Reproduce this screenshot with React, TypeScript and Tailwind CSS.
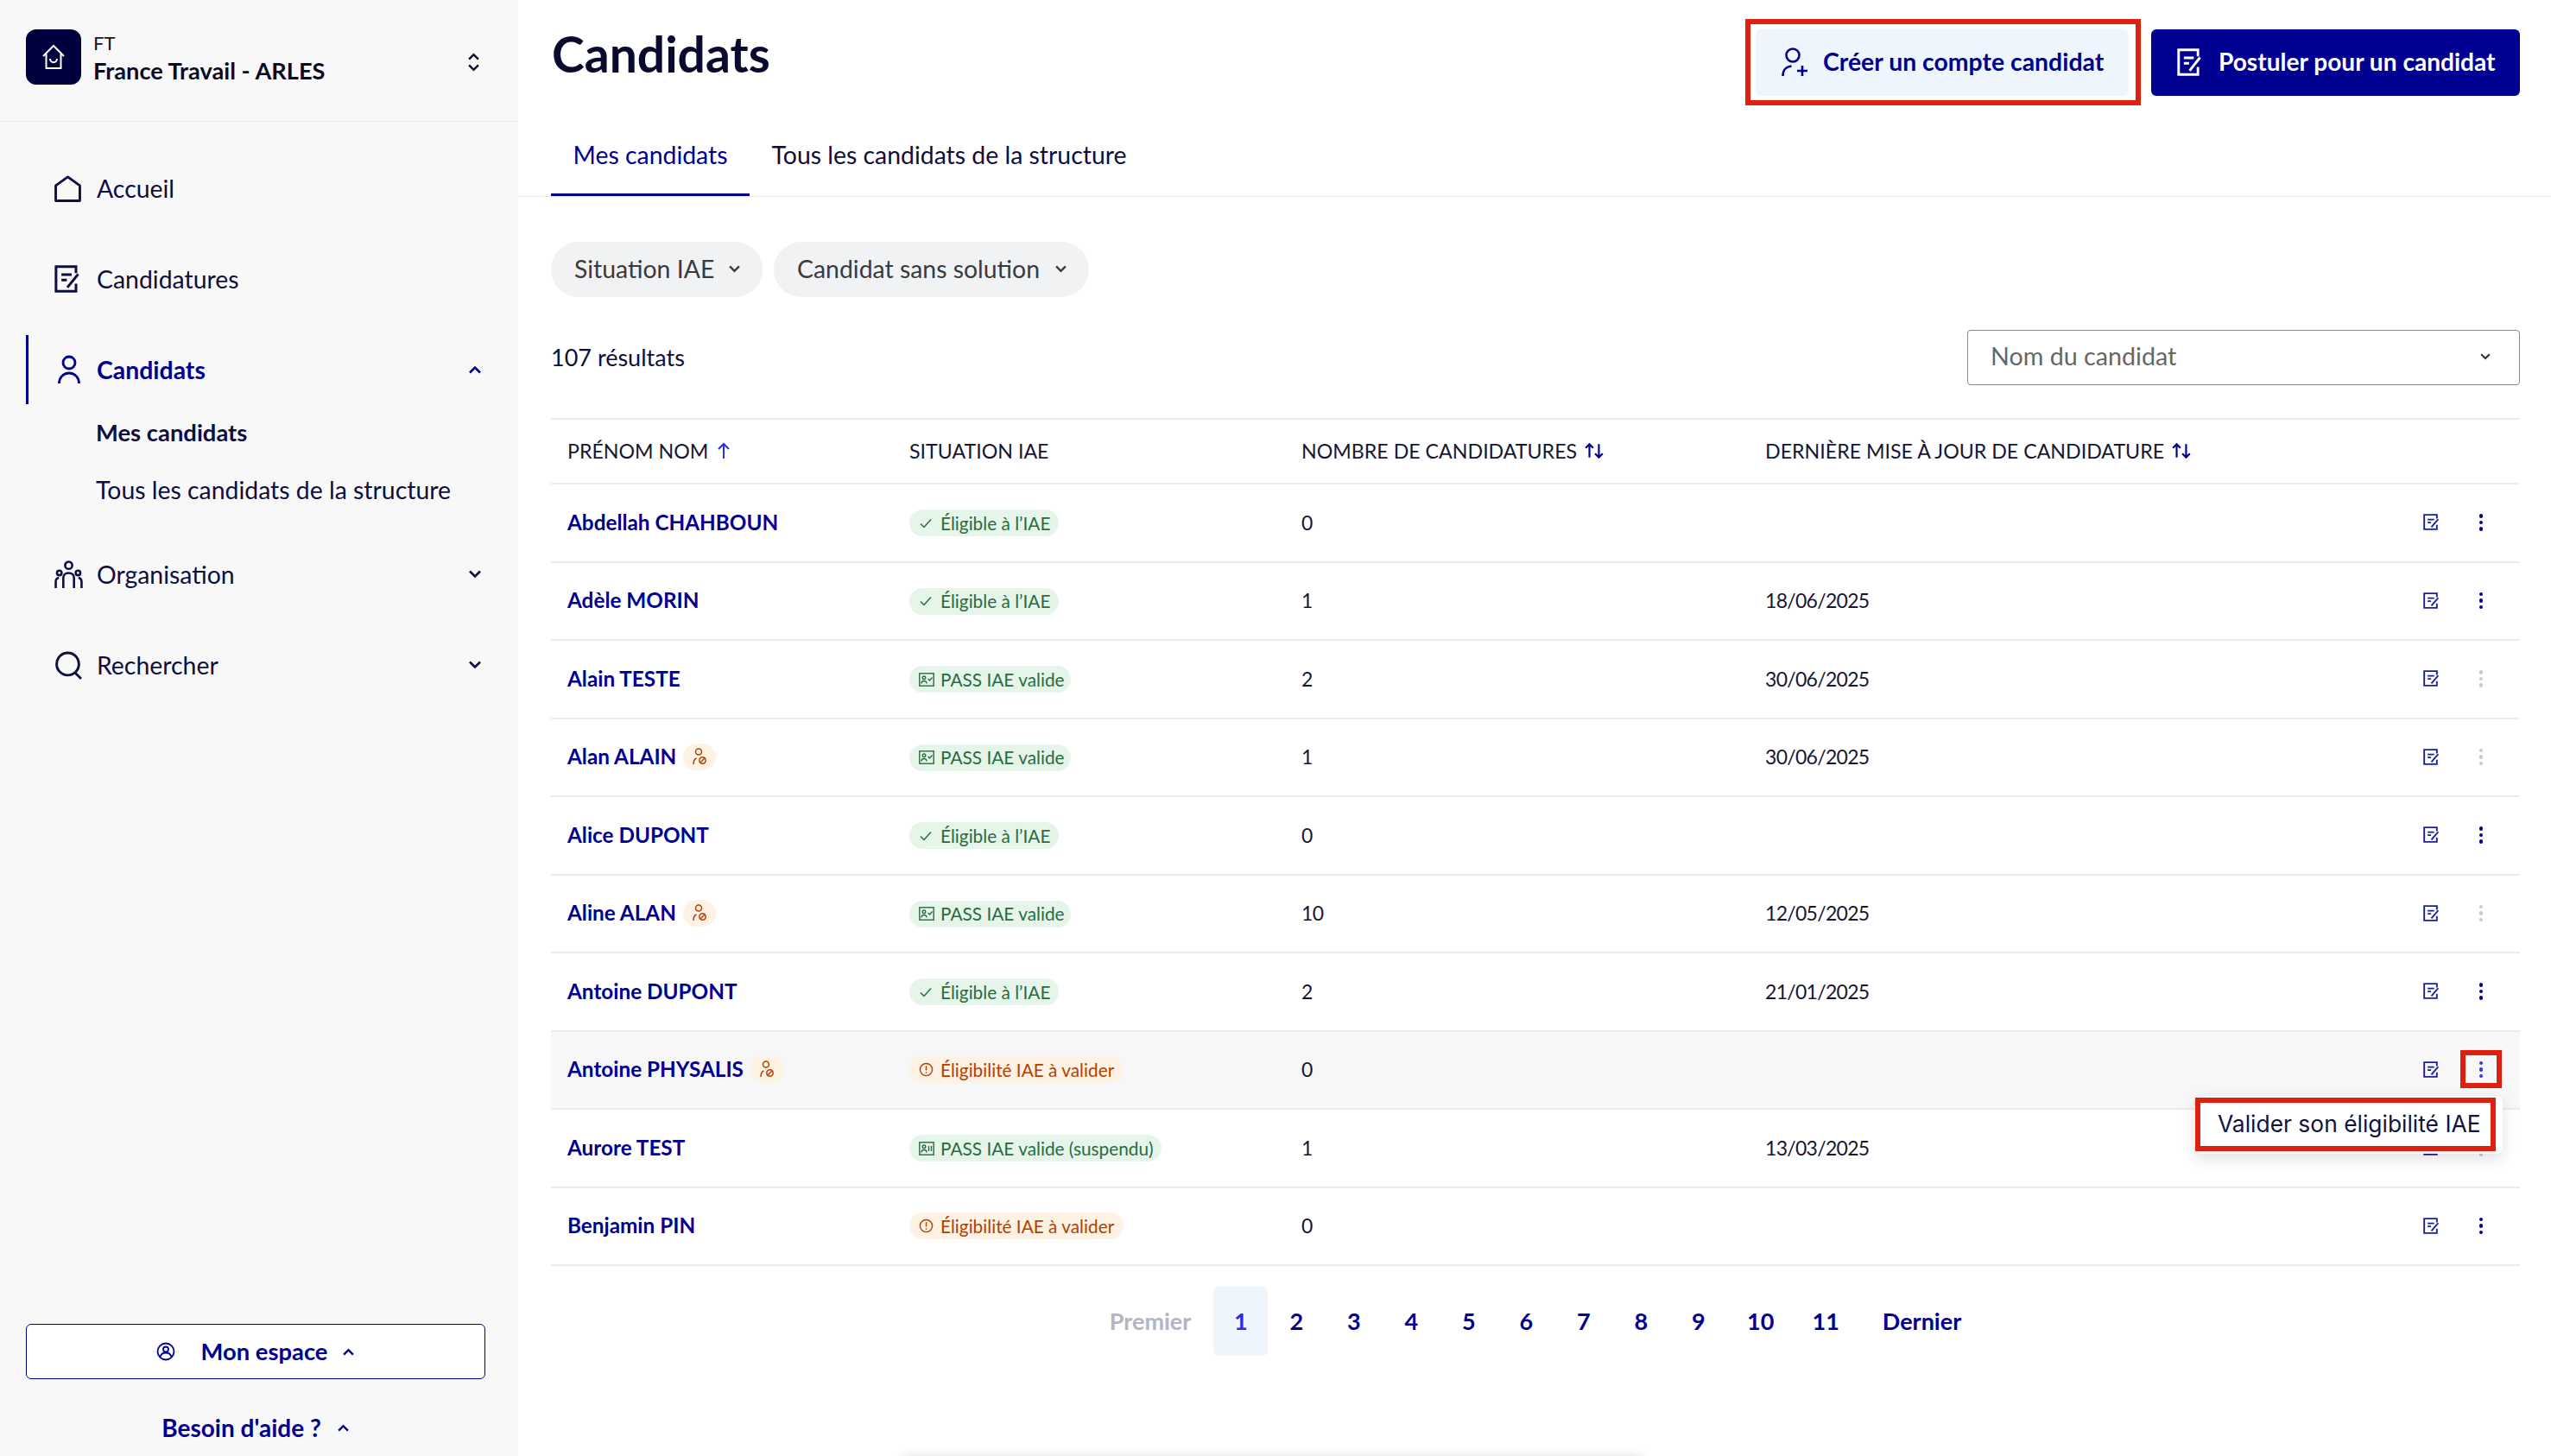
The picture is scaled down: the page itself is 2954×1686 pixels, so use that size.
import React from "react";

const navy = "#000091";

function EditIcon({ className }: { className?: string }) {
  return (
    <svg viewBox="0 0 24 26" preserveAspectRatio="none" fill="none" stroke="currentColor" strokeWidth="2.400" className={className}>
      <path d="M20 7.500V1.500H1.500v23H20v-7" />
      <path d="M6.500 9h9.500M6.500 14h5M12 21 22 8.500" />
    </svg>
  );
}

function Chevron({ up, className }: { up?: boolean; className?: string }) {
  return (
    <svg viewBox="0 0 16 10" fill="none" stroke="currentColor" strokeWidth="2.600" className={className}>
      <path d={up ? "M2 8.500 8 2.500l6 6" : "M2 1.500l6 6 6-6"} />
    </svg>
  );
}

function PersonIcon({ className }: { className?: string }) {
  return (
    <svg viewBox="0 0 28 34" fill="none" stroke="currentColor" strokeWidth="2.800" className={className}>
      <circle cx="14" cy="9" r="7" />
      <path d="M2.500 33c0-7 5-12 11.500-12S25.500 26 25.500 33" />
    </svg>
  );
}

function NavIcon({ name }: { name: string }) {
  if (name === "home") {
    return (
      <svg viewBox="0 0 30 30" fill="none" stroke="currentColor" strokeWidth="2.800" className="h-[31px] w-[31px]">
        <path d="M15 1.800 28.500 11.500V28.500H1.500V11.500Z" strokeLinejoin="round" />
      </svg>
    );
  }
  if (name === "edit") return <EditIcon className="h-[32px] w-[30px]" />;
  if (name === "person") return <PersonIcon className="h-[34px] w-[28px]" />;
  if (name === "org") {
    return (
      <svg viewBox="0 0 32 32" fill="none" stroke="currentColor" strokeWidth="2.500" className="h-[33px] w-[33px]">
        <circle cx="16" cy="5.500" r="4" />
        <circle cx="5.500" cy="14" r="2.600" />
        <circle cx="26.500" cy="14" r="2.600" />
        <path d="M10 31V19.500c0-3.500 2.500-5.500 6-5.500s6 2 6 5.500V31" />
        <path d="M1.500 31v-7c0-2 1-4 3.500-4.500M30.500 31v-7c0-2-1-4-3.500-4.500" />
      </svg>
    );
  }
  return (
    <svg viewBox="0 0 32 32" fill="none" stroke="currentColor" strokeWidth="2.800" className="h-[33px] w-[33px]">
      <circle cx="15" cy="14.500" r="12.500" />
      <path d="M23 24l7 7" />
    </svg>
  );
}

function BadgeIcon({ kind }: { kind: string }) {
  if (kind === "check") {
    return (
      <svg viewBox="0 0 16 16" fill="none" stroke="currentColor" strokeWidth="1.500" className="h-[16px] w-[16px]">
        <path d="M2 8.500l4 4 8-9" />
      </svg>
    );
  }
  if (kind === "alert") {
    return (
      <svg viewBox="0 0 18 18" fill="none" stroke="currentColor" strokeWidth="1.500" className="h-[17px] w-[17px]">
        <circle cx="9" cy="9" r="7.500" />
        <path d="M9 4.500v5.500M9 11.800v1.700" />
      </svg>
    );
  }
  return (
    <svg viewBox="0 0 18 16" fill="none" stroke="currentColor" strokeWidth="1.400" className="h-[16px] w-[18px]">
      <rect x="0.800" y="0.800" width="16.400" height="14.400" />
      <circle cx="6" cy="5.800" r="1.800" />
      <path d="M3 12.500c0-4 6-4 6 0" />
      {kind === "card" ? <path d="M10.500 7l2 2 3-3.500" /> : <path d="M11.500 5v6M14.500 5v6" />}
    </svg>
  );
}

function Badge({ situation }: { situation: string }) {
  const config: Record<string, { label: string; kind: string; width: string; orange: boolean }> = {
    eligible: { label: "Éligible à l’IAE", kind: "check", width: "w-[173px]", orange: false },
    pass: { label: "PASS IAE valide", kind: "card", width: "w-[187px]", orange: false },
    suspended: { label: "PASS IAE valide (suspendu)", kind: "suspended", width: "w-[292px]", orange: false },
    pending: { label: "Éligibilité IAE à valider", kind: "alert", width: "w-[248px]", orange: true },
  };
  const c = config[situation];
  return (
    <span
      className={`inline-flex h-[31px] items-center rounded-full pl-[11px] text-[20.800px] ${c.width} ${
        c.orange ? "bg-[#fdf2e3] text-[#b34000]" : "bg-[#e5f5ea] text-[#2c6b40]"
      }`}
    >
      <span className="flex w-[25px] shrink-0 items-center">
        <BadgeIcon kind={c.kind} />
      </span>
      <span className="whitespace-nowrap">{c.label}</span>
    </span>
  );
}

const rows = [
  { name: "Abdellah CHAHBOUN", situation: "eligible", count: "0", date: "", off: false, ban: false },
  { name: "Adèle MORIN", situation: "eligible", count: "1", date: "18/06/2025", off: false, ban: false },
  { name: "Alain TESTE", situation: "pass", count: "2", date: "30/06/2025", off: true, ban: false },
  { name: "Alan ALAIN", situation: "pass", count: "1", date: "30/06/2025", off: true, ban: true },
  { name: "Alice DUPONT", situation: "eligible", count: "0", date: "", off: false, ban: false },
  { name: "Aline ALAN", situation: "pass", count: "10", date: "12/05/2025", off: true, ban: true },
  { name: "Antoine DUPONT", situation: "eligible", count: "2", date: "21/01/2025", off: false, ban: false },
  { name: "Antoine PHYSALIS", situation: "pending", count: "0", date: "", off: false, ban: true, open: true },
  { name: "Aurore TEST", situation: "suspended", count: "1", date: "13/03/2025", off: true, ban: false },
  { name: "Benjamin PIN", situation: "pending", count: "0", date: "", off: false, ban: false },
];

function Dots({ color }: { color: string }) {
  return (
    <span className="flex flex-col items-center gap-[3px]">
      <span className={`h-[4.500px] w-[4.500px] rounded-full ${color}`} />
      <span className={`h-[4.500px] w-[4.500px] rounded-full ${color}`} />
      <span className={`h-[4.500px] w-[4.500px] rounded-full ${color}`} />
    </span>
  );
}

function SortIcon() {
  return (
    <svg viewBox="0 0 22 18" fill="none" stroke={navy} strokeWidth="2" className="ml-[8px] h-[20px] w-[24px]">
      <path d="M6 16V2M2 6l4-4 4 4M16 2v14M12 12l4 4 4-4" />
    </svg>
  );
}

export default function App() {
  return (
    <div className="flex h-[1686px] w-[2954px] overflow-hidden bg-white font-['Lato',sans-serif] text-[28.400px] text-[#0e0e3f]">
      <aside className="flex w-[600px] shrink-0 flex-col bg-[#f8f8f8]">
        <div className="flex h-[141px] shrink-0 items-start border-b-[1px] border-[#e9e9e9] pl-[30px] pr-[44px] pt-[34px]">
          <div className="flex h-[64px] w-[64px] items-center justify-center rounded-[12px] bg-[#00003f]">
            <svg viewBox="0 0 28 30" fill="none" stroke="white" strokeWidth="2" className="h-[30px] w-[28px]">
              <path d="M2 14 14 2l12 12M5.500 11.500V28h17V11.500" />
              <path d="M10 17c0 5.500 8 5.500 8 0" />
            </svg>
          </div>
          <div className="ml-[14px] flex-1">
            <div className="mt-[2px] h-[28px] text-[22px] leading-[28px] text-[#161616]">FT</div>
            <div className="mt-[2px] text-[27.200px] font-bold leading-[32px] text-[#0a0a24]">France Travail - ARLES</div>
          </div>
          <div className="mt-[27px] flex flex-col gap-[4px] text-[#0a0a24]">
            <Chevron up className="h-[9px] w-[15px]" />
            <Chevron className="h-[9px] w-[15px]" />
          </div>
        </div>

        <nav className="flex flex-col pt-[37px]">
          {[
            { label: "Accueil", icon: "home" },
            { label: "Candidatures", icon: "edit" },
          ].map((item) => (
            <div key={item.label} className="mb-[25px] ml-[30px] flex h-[80px] items-center pl-[33px]">
              <span className="flex w-[49px] items-center">
                <NavIcon name={item.icon} />
              </span>
              <span>{item.label}</span>
            </div>
          ))}
          <div className="ml-[30px] mr-[44px] flex h-[80px] items-center border-l-[3px] border-[#000091] pl-[30px] text-[#000091]">
            <span className="flex w-[49px] items-center pl-[3px]">
              <NavIcon name="person" />
            </span>
            <span className="flex-1 font-bold">Candidats</span>
            <Chevron up className="mr-[-2px] h-[10px] w-[16px] text-[#000091]" />
          </div>
          <div className="flex h-[66px] items-center pl-[111px] text-[27.400px] font-bold">Mes candidats</div>
          <div className="mb-[25px] flex h-[66px] items-center pl-[111px]">Tous les candidats de la structure</div>
          {[
            { label: "Organisation", icon: "org" },
            { label: "Rechercher", icon: "search" },
          ].map((item) => (
            <div key={item.label} className="mb-[25px] ml-[30px] mr-[44px] flex h-[80px] items-center pl-[33px]">
              <span className="flex w-[49px] items-center">
                <NavIcon name={item.icon} />
              </span>
              <span className="flex-1">{item.label}</span>
              <Chevron className="mr-[-2px] h-[10px] w-[16px]" />
            </div>
          ))}
        </nav>

        <div className="mt-auto pb-[13px] pl-[30px] pr-[38px] font-bold text-[#000091]">
          <div className="flex h-[64px] items-center justify-center rounded-[6px] border-[1.500px] border-[#000091] bg-white">
            <svg viewBox="0 0 22 22" fill="none" stroke="currentColor" strokeWidth="1.800" className="h-[22px] w-[22px]">
              <circle cx="11" cy="11" r="9.500" />
              <circle cx="11" cy="8.500" r="3" />
              <path d="M4.500 17c1-3.500 3.500-4.500 6.500-4.500s5.500 1 6.500 4.500" />
            </svg>
            <span className="ml-[29px] text-[27.400px]">Mon espace</span>
            <Chevron up className="ml-[16px] h-[9px] w-[15px]" />
          </div>
          <div className="mt-[36px] flex h-[40px] items-center justify-center text-[28px]">
            <span>Besoin d'aide ?</span>
            <Chevron up className="ml-[18px] h-[9px] w-[15px]" />
          </div>
        </div>
      </aside>

      <main className="relative min-w-0 flex-1">
        <div className="flex h-[130px] items-start justify-between pl-[39px] pr-[36px] pt-[22px]">
          <h1 className="mt-[5px] text-[57px] font-bold leading-[70px] text-[#0a0a2e]">Candidats</h1>
          <div className="flex gap-[12px]">
            <div className="border-[6px] border-[#dd200f] pb-[5px] pl-[6px] pr-[8px] pt-[6px]">
              <div className="flex h-[77px] w-[432px] items-center rounded-[6px] bg-[#eef5fd] pb-[2px] pl-[30px] font-bold text-[#000091]">
                <svg viewBox="0 0 32 34" fill="none" stroke="currentColor" strokeWidth="2.600" className="h-[34px] w-[32px]">
                  <circle cx="13" cy="9" r="7.500" />
                  <path d="M1.500 33c0-7 4-11 10-11.500M24 21v12M18 27h12" />
                </svg>
                <span className="ml-[16px]">Créer un compte candidat</span>
              </div>
            </div>
            <div className="mt-[12px] flex h-[77px] w-[427px] items-center rounded-[6px] bg-[#000091] pb-[2px] pl-[30px] text-[28.100px] font-bold text-white">
              <EditIcon className="h-[32px] w-[29px]" />
              <span className="ml-[19px]">Postuler pour un candidat</span>
            </div>
          </div>
        </div>

        <div className="flex h-[98px] border-b-[1px] border-[#e6e6e6] pl-[38px]">
          <div className="flex h-[97px] items-center border-b-[3px] border-[#000091] px-[25.500px] pt-[4px] text-[#000091]">Mes candidats</div>
          <div className="flex h-[97px] items-center px-[25.500px] pt-[1px]">Tous les candidats de la structure</div>
        </div>

        <div className="pl-[38px] pr-[36px]">
          <div className="mt-[52px] flex gap-[13px] text-[#3a3a3a]">
            <div className="flex h-[64px] w-[245px] items-center justify-between rounded-full bg-[#f1f2f4] pb-[2px] pl-[27px] pr-[25px]">
              Situation IAE
              <Chevron className="h-[9px] w-[15px]" />
            </div>
            <div className="flex h-[64px] w-[365px] items-center justify-between rounded-full bg-[#f1f2f4] pb-[2px] pl-[27px] pr-[25px]">
              Candidat sans solution
              <Chevron className="h-[9px] w-[15px]" />
            </div>
          </div>

          <div className="mt-[38px] flex items-center justify-between">
            <span className="text-[27px]">107 résultats</span>
            <div className="flex h-[64px] w-[640px] items-center justify-between rounded-[4px] border-[1.500px] border-[#8a8a8a] pb-[2px] pl-[26px] pr-[32px] text-[28.700px] text-[#666666]">
              Nom du candidat
              <Chevron className="h-[8px] w-[14px] text-[#333333]" />
            </div>
          </div>

          <div className="mt-[38px] border-t-[2px] border-[#ebebeb]">
            <div className="flex h-[75px] items-center border-b-[2px] border-[#ebebeb] pl-[19px] text-[23.200px] uppercase text-[#161633]">
              <div className="flex w-[396px] items-center">
                Prénom nom
                <svg viewBox="0 0 16 20" fill="none" stroke="#2430f0" strokeWidth="2" className="ml-[10px] h-[20px] w-[16px]">
                  <path d="M8 19V2M2 8l6-6 6 6" />
                </svg>
              </div>
              <div className="w-[454px]">Situation IAE</div>
              <div className="flex w-[537px] items-center">
                Nombre de candidatures
                <SortIcon />
              </div>
              <div className="flex items-center">
                Dernière mise à jour de candidature
                <SortIcon />
              </div>
            </div>

            {rows.map((row) => (
              <div
                key={row.name}
                className={`relative flex h-[90.500px] items-center border-b-[2px] border-[#ebebeb] pb-[1px] pl-[19px] pr-[21px] text-[23px] tracking-[-0.7px] text-[#161633] ${
                  row.open ? "bg-[#f7f7f7]" : ""
                }`}
              >
                <div className="flex w-[396px] items-center tracking-normal">
                  <span className="text-[24.300px] font-bold text-[#000091]">{row.name}</span>
                  {row.ban && (
                    <span className="ml-[8px] flex h-[31px] w-[38px] items-center justify-center rounded-full bg-[#fdf2e3] text-[#b34000]">
                      <svg viewBox="0 0 16 20" fill="none" stroke="currentColor" strokeWidth="1.500" className="h-[20px] w-[16px]">
                        <circle cx="7" cy="4.500" r="3.500" />
                        <path d="M1 19c0-4 1-6 3.500-7" />
                        <circle cx="11.500" cy="14.500" r="3.700" />
                        <path d="M9 17l5-5" />
                      </svg>
                    </span>
                  )}
                </div>
                <div className="w-[454px] tracking-normal">
                  <Badge situation={row.situation} />
                </div>
                <div className="w-[537px]">{row.count}</div>
                <div className="flex-1">{row.date}</div>
                <EditIcon className="h-[19px] w-[19px] text-[#1a1f9c]" />
                <div
                  className={`ml-[24px] flex h-[44px] w-[48px] items-center justify-center ${
                    row.open ? "border-[6px] border-[#dd200f]" : ""
                  }`}
                >
                  <Dots color={row.open ? "bg-[#2a36f5]" : row.off ? "bg-[#c9c9d2]" : "bg-[#000091]"} />
                </div>
                {row.open && (
                  <div className="absolute right-[20px] top-[74px] z-10 rounded-[8px] bg-white pb-[3px] pr-[8px] pt-[2px] shadow-[0_6px_18px_rgba(0,0,0,0.12)]">
                    <div className="flex h-[62px] w-[348px] items-center border-[6px] border-[#dd200f] pl-[20px] font-['Inter',sans-serif] text-[26.400px] tracking-normal text-[#12123f]">
                      Valider son éligibilité IAE
                    </div>
                  </div>
                )}
              </div>
            ))}
          </div>

          <div className="mt-[24px] flex items-start justify-center gap-[3.500px] text-[27px] font-bold text-[#000091]">
            <div className="flex h-[80px] w-[117px] items-center text-[#b4b4c4]">Premier</div>
            {["1", "2", "3", "4", "5", "6", "7", "8", "9", "10", "11"].map((p) => (
              <div
                key={p}
                className={`flex h-[80px] items-center justify-center rounded-[6px] ${
                  p === "1" ? "mr-[-2px] bg-[#eef5fd] text-[#2430f0]" : ""
                } ${p === "10" ? "w-[74px]" : p === "11" ? "w-[70px]" : "w-[63px]"}`}
              >
                {p}
              </div>
            ))}
            <div className="flex h-[80px] items-center pl-[27px]">Dernier</div>
          </div>
        </div>

        {/* bandeau hors champ, seule son ombre dépasse en bas de page */}
        <div className="absolute left-[444px] top-[1686px] h-[40px] w-[859px] rounded-[8px] bg-white shadow-[0_0_12px_rgba(0,0,0,0.14)]" />
      </main>
    </div>
  );
}
